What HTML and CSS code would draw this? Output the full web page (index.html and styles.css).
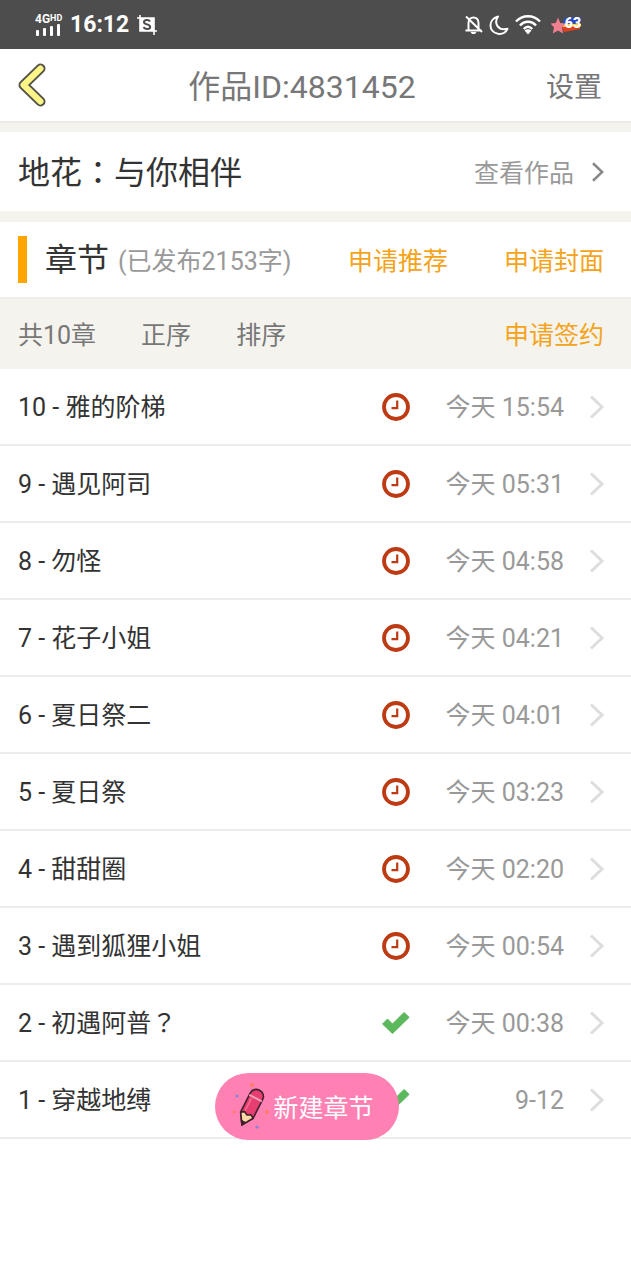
FILE: index.html
```html
<!DOCTYPE html>
<html lang="zh-CN">
<head>
<meta charset="utf-8">
<meta name="viewport" content="width=device-width, initial-scale=1">
<title>作品ID:4831452</title>
<link rel="stylesheet" href="styles.css">
</head>
<body>
<svg class="sprite" aria-hidden="true">
  <symbol id="clock" viewBox="0 0 30 30">
    <circle cx="15" cy="15" r="12" fill="none" stroke="#bd3a12" stroke-width="3.8"/>
    <path d="M16.2 8.5V16.2H10.5" fill="none" stroke="#bd3a12" stroke-width="2.2"/>
  </symbol>
  <symbol id="check" viewBox="0 0 30 30">
    <path d="M3 14.500L6.500 11L11.500 16L23 4.500L26.800 8L28 9.500L11.500 25.500L1.500 16Z" fill="#5cb85c" stroke="#5cb85c" stroke-width="1" stroke-linejoin="round"/>
  </symbol>
  <symbol id="chevron" viewBox="0 0 16 24">
    <path d="M2 1.5L13 12L2 22.5" fill="none" stroke="currentColor" stroke-width="3"/>
  </symbol>
</svg>

<div class="status">
  <div class="status-group">
    <div class="signal">
      <span class="network">4G<small>HD</small></span>
      <svg width="26" height="12" viewBox="0 0 26 12" fill="#fff"><rect x="1" y="6" width="3" height="6" rx="1"/><rect x="8" y="4" width="3" height="8" rx="1"/><rect x="15" y="2" width="3" height="10" rx="1"/><rect x="22" y="0" width="3" height="12" rx="1"/></svg>
    </div>
    <span class="time">16:12</span>
    <svg width="20" height="20" viewBox="0 0 20 20"><path d="M3 0V16H20M0 3H17V20" fill="none" stroke="#fff" stroke-width="1.6"/><rect x="3" y="3" width="14" height="13" fill="#fff"/><path d="M13 6.5C12 4.5 7 4.5 7 7.2C7 10 13.2 8.8 13.2 11.8C13.2 14.8 7.5 14.6 6.8 12" fill="none" stroke="#4d4d4d" stroke-width="2"/></svg>
  </div>
  <div class="status-group status-right">
    <svg width="18" height="20" viewBox="0 0 18 20" fill="none" stroke="#fff" stroke-width="2"><path d="M3.5 15V8C3.5 0.5 13.5 0.5 13.5 8V15M0.5 15.5H16.5M1 1.5L17 17"/><path d="M5.5 17H11.5L10 19H7Z" fill="#fff" stroke="none"/></svg>
    <svg width="20" height="20" viewBox="0 0 20 20"><path d="M9 1.5C-1 4 -1 17 9 18.8C13.5 19.3 17 17 18.5 13.8C9 16 4.5 8.5 9 1.5Z" fill="none" stroke="#fff" stroke-width="2" stroke-linejoin="round"/></svg>
    <svg width="26" height="20" viewBox="0 0 26 20" fill="none" stroke="#fff" stroke-width="2.4"><path d="M1 6.5C7.500 -0.5 18.500 -0.5 25 6.500M5 10.500C9.500 5.500 16.500 5.500 21 10.500M8.800 14C11.500 11 14.500 11 17.200 14"/><path d="M9.500 15.500Q13 13 16.500 15.500L13 19.500Z" fill="#fff" stroke="none"/></svg>
    <div class="battery">
      <svg width="32" height="18" viewBox="0 0 32 18"><path d="M14 2L30 1V6L11 9Z" fill="#2448c8"/><path d="M12 8H30V10L12 12Z" fill="#f7d648"/><path d="M11 11L29 10V13L13 16Z" fill="#e0421e"/><path d="M7 1.500L9.200 7L15 7.500L11 11.500L12.200 17.500L7 14.500L1.800 17.500L3 11.500L-.5 7.500L4.800 7Z" fill="#f08090"/></svg>
      <span class="battery-level">63</span>
    </div>
  </div>
</div>

<header class="header">
  <button class="back" aria-label="返回">
    <svg width="28" height="44" viewBox="0 0 28 44" fill="none" stroke-linecap="round" stroke-linejoin="round"><path d="M22.500 5.500L5.500 22L22.500 38.500" stroke="#555348" stroke-width="10"/><path d="M22.500 5.500L5.500 22L22.500 38.500" stroke="#fdf587" stroke-width="6"/></svg>
  </button>
  <h1 class="title">作品ID:4831452</h1>
  <button class="settings">设置</button>
</header>

<main>
  <section class="work">
    <h2 class="heading">地花<span class="mid" lang="zh-TW">：</span>与你相伴</h2>
    <a class="view" href="#"><span>查看作品</span><svg width="14" height="20" viewBox="0 0 16 24"><use href="#chevron"/></svg></a>
  </section>

  <section class="chapters">
    <div class="chapter-head">
      <h2 class="heading"><span>章节</span></h2>
      <span class="words">(已发布2153字)</span>
      <button class="apply recommend">申请推荐</button>
      <button class="apply">申请封面</button>
    </div>
    <div class="toolbar">
      <span>共10章</span>
      <button>正序</button>
      <button>排序</button>
      <button class="apply contract">申请签约</button>
    </div>
    <ul class="list">
      <li><a class="row" href="#"><span>10 - 雅的阶梯</span><svg class="state"><use href="#clock"/></svg><time>今天 15:54</time><svg class="go"><use href="#chevron"/></svg></a></li>
      <li><a class="row" href="#"><span>9 - 遇见阿司</span><svg class="state"><use href="#clock"/></svg><time>今天 05:31</time><svg class="go"><use href="#chevron"/></svg></a></li>
      <li><a class="row" href="#"><span>8 - 勿怪</span><svg class="state"><use href="#clock"/></svg><time>今天 04:58</time><svg class="go"><use href="#chevron"/></svg></a></li>
      <li><a class="row" href="#"><span>7 - 花子小姐</span><svg class="state"><use href="#clock"/></svg><time>今天 04:21</time><svg class="go"><use href="#chevron"/></svg></a></li>
      <li><a class="row" href="#"><span>6 - 夏日祭二</span><svg class="state"><use href="#clock"/></svg><time>今天 04:01</time><svg class="go"><use href="#chevron"/></svg></a></li>
      <li><a class="row" href="#"><span>5 - 夏日祭</span><svg class="state"><use href="#clock"/></svg><time>今天 03:23</time><svg class="go"><use href="#chevron"/></svg></a></li>
      <li><a class="row" href="#"><span>4 - 甜甜圈</span><svg class="state"><use href="#clock"/></svg><time>今天 02:20</time><svg class="go"><use href="#chevron"/></svg></a></li>
      <li><a class="row" href="#"><span>3 - 遇到狐狸小姐</span><svg class="state"><use href="#clock"/></svg><time>今天 00:54</time><svg class="go"><use href="#chevron"/></svg></a></li>
      <li><a class="row" href="#"><span>2 - 初遇阿普<b class="mid" lang="zh-TW">？</b></span><svg class="state"><use href="#check"/></svg><time>今天 00:38</time><svg class="go"><use href="#chevron"/></svg></a></li>
      <li><a class="row" href="#"><span>1 - 穿越地缚</span><svg class="state"><use href="#check"/></svg><time>9-12</time><svg class="go"><use href="#chevron"/></svg></a></li>
    </ul>
  </section>
</main>

<button class="create">
  <svg width="38" height="48" viewBox="0 0 38 48">
    <g transform="rotate(27 19 24)" stroke="#40202c" stroke-width="1.600" stroke-linejoin="round">
      <path d="M12 33V12C12 3 26 3 26 12V33L19 44Z" fill="#e63e70"/>
      <path d="M12 33L15.500 31L19 33L22.500 31L26 33L19 44Z" fill="#fbd9a5"/>
      <path d="M17 40.500H21L19 44Z" fill="#40202c"/>
      <path d="M12 14H26" stroke="#f9a0b8" stroke-width="2"/>
      <path d="M15.500 16V30" stroke="#f76b91"/>
    </g>
    <g fill="#ff7b62"><circle cx="20" cy="2" r="2"/><circle cx="2" cy="29" r="1.500"/><circle cx="35" cy="29" r="2"/></g>
    <g fill="#8585d8"><circle cx="5" cy="13" r="1.600"/><circle cx="25" cy="44" r="1.600"/></g>
  </svg>
  <span>新建章节</span>
</button>
</body>
</html>
```
FILE: styles.css
```css
* {
  box-sizing: border-box;
}

body {
  margin: 0;
  background: #fff;
  color: #333;
  font-family: Roboto, "Noto Sans CJK SC", sans-serif;
  font-size: 25px;
  line-height: 36px;
}

button {
  padding: 0;
  border: 0;
  background: none;
  color: inherit;
  font: inherit;
  cursor: pointer;
}

a {
  color: inherit;
  text-decoration: none;
}

svg {
  display: block;
  flex: none;
}

.sprite {
  position: absolute;
  width: 0;
  height: 0;
}

.mid {
  font-family: "Noto Sans CJK TC", sans-serif;
  font-weight: 400;
  line-height: 1;
}

.status {
  display: flex;
  justify-content: space-between;
  align-items: center;
  height: 49px;
  padding: 0 48px 0 35px;
  background: #4d4d4d;
  color: #fff;
}

.status-group {
  display: flex;
  align-items: center;
  gap: 8px;
}

.status-right {
  gap: 6px;
}

.signal {
  display: flex;
  flex-direction: column;
  width: 27px;
}

.network {
  height: 10px;
  font-size: 12px;
  font-weight: 700;
  line-height: 10px;
  white-space: nowrap;
}

.network small {
  font-size: 9px;
  line-height: 8px;
  vertical-align: top;
}

.time {
  font-size: 23px;
  font-weight: 700;
}

.battery {
  position: relative;
  margin-left: 4px;
}

.battery-level {
  position: absolute;
  top: 0;
  right: 2px;
  font-size: 14px;
  font-weight: 900;
  line-height: 14px;
}

.header {
  display: grid;
  grid-template-columns: 64px 1fr 80px;
  align-items: center;
  height: 74px;
  padding: 0 29px 0 18px;
  border-bottom: 2px solid #ebeae6;
  color: #777;
}

.title {
  margin: 0;
  padding-top: 4px;
  font-size: 32px;
  font-weight: 400;
  text-align: center;
}

.settings {
  padding-top: 6px;
  font-size: 28px;
  text-align: right;
}

.heading {
  margin: 0;
  font-size: 32px;
  font-weight: 400;
}

.work {
  display: flex;
  justify-content: space-between;
  align-items: center;
  height: 99px;
  padding: 0 26px 0 18px;
  border: solid #f4f3ee;
  border-width: 9px 0 11px;
}

.work .heading {
  padding-top: 2px;
}

.view {
  display: flex;
  align-items: center;
  gap: 17px;
  color: #999;
}

.view span {
  padding-top: 4px;
}

.view svg {
  color: #888;
}

.chapter-head {
  display: flex;
  align-items: center;
  height: 75px;
  padding: 0 27px 0 18px;
}

.chapter-head .heading {
  padding-left: 18px;
  border-left: 9px solid #ffa500;
  line-height: 45px;
}

.heading span {
  vertical-align: middle;
}

.heading .mid {
  vertical-align: baseline;
}

.words {
  margin-left: 9px;
  padding-top: 4px;
  color: #999;
}

.apply {
  padding-top: 4px;
  color: #f5a31a;
}

.recommend {
  margin: 0 56px 0 auto;
}

.toolbar {
  display: flex;
  align-items: center;
  gap: 45px;
  height: 72px;
  padding: 0 27px 0 18px;
  border-top: 2px solid #eeede9;
  background: #f4f3ee;
  color: #777;
}

.toolbar > * {
  padding-top: 4px;
}

.contract {
  margin-left: auto;
}

.list {
  margin: 0;
  padding: 0;
  list-style: none;
}

.row {
  display: grid;
  grid-template-columns: 1fr 30px 153px 41px;
  align-items: center;
  height: 77px;
  padding: 0 26px 0 18px;
  border-bottom: 2px solid #ececec;
}

.row > span,
.row time {
  padding-top: 3px;
}

.row time {
  color: #999;
  text-align: right;
}

.state {
  width: 30px;
  height: 30px;
}

.go {
  justify-self: end;
  width: 16px;
  height: 24px;
  color: #ddd;
}

.create {
  position: fixed;
  bottom: 140px;
  left: 34%;
  display: flex;
  align-items: center;
  gap: 4px;
  height: 67px;
  padding: 0 25px 0 17px;
  border-radius: 34px;
  background: #ff80b3;
  color: #fff;
}

.create span {
  padding-top: 4px;
}
```
